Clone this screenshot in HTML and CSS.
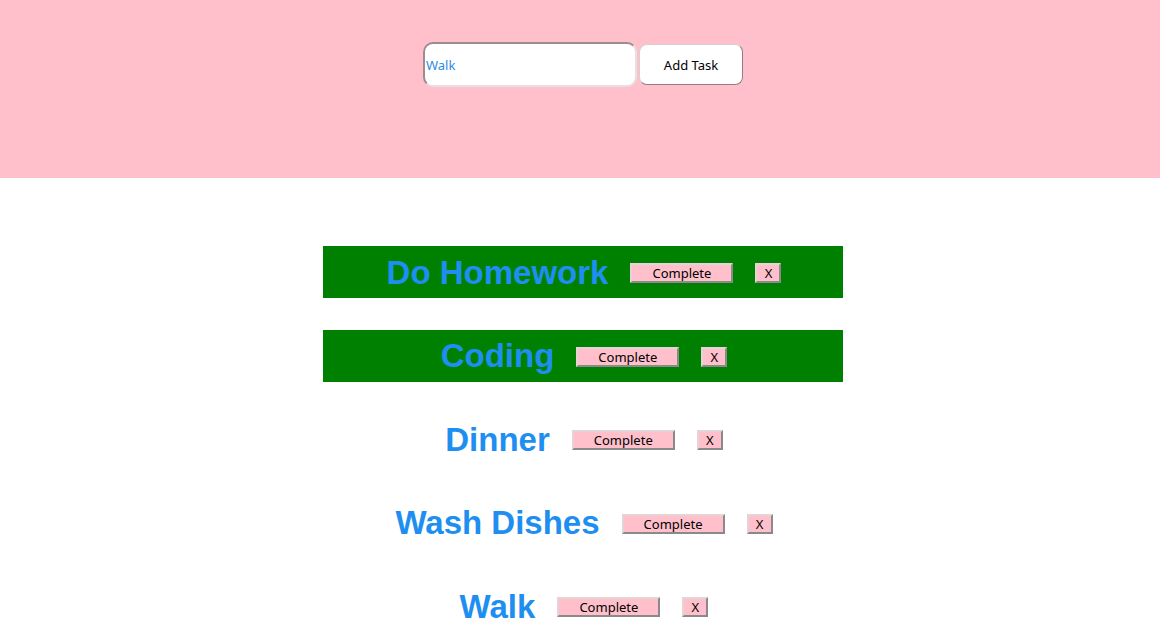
FILE: index.html
```html
<!DOCTYPE html>
<html>
<head>
<meta charset="utf-8">
<link rel="stylesheet" href="styles.css">
</head>
<body>
<header class="top">
  <form class="add-form">
    <input class="task-input" type="text" value="Walk">
    <button class="add-btn" type="button">Add Task</button>
  </form>
</header>
<main class="list">
  <div class="task done"><h2 class="task-title">Do Homework</h2><button class="btn-complete">Complete</button><button class="btn-x">X</button></div>
  <div class="task done"><h2 class="task-title">Coding</h2><button class="btn-complete">Complete</button><button class="btn-x">X</button></div>
  <div class="task"><h2 class="task-title">Dinner</h2><button class="btn-complete">Complete</button><button class="btn-x">X</button></div>
  <div class="task"><h2 class="task-title">Wash Dishes</h2><button class="btn-complete">Complete</button><button class="btn-x">X</button></div>
  <div class="task"><h2 class="task-title">Walk</h2><button class="btn-complete">Complete</button><button class="btn-x">X</button></div>
</main>
</body>
</html>
```
FILE: styles.css
```css
html, body {
  margin: 0;
  padding: 0;
  background: #ffffff;
}

.top {
  background: #ffc0cb;
  height: 178px;
  padding-left: 6px;
  box-sizing: border-box;
}

.add-form {
  display: flex;
  justify-content: center;
  align-items: center;
  gap: 2px;
  padding-top: 42px;
  margin: 0;
}

.task-input {
  width: 214px;
  height: 45px;
  box-sizing: border-box;
  border: 2px solid;
  border-color: #9c8c8c #e8e0e0 #e8e0e0 #9c8c8c;
  border-radius: 10px;
  padding: 0 1px;
  font-family: "Noto Sans", sans-serif;
  font-size: 13px;
  color: #2f8de4;
  background: #fff;
  outline: none;
}

.add-btn {
  width: 104px;
  height: 41px;
  box-sizing: border-box;
  border: 1px solid;
  border-color: #d6d0d0 #8c8080 #8c8080 #d6d0d0;
  border-radius: 8px;
  background: #fff;
  font-family: "Noto Sans", sans-serif;
  font-size: 13px;
  color: #000;
  padding: 0;
}

.list {
  padding: 68px 0 0 6px;
  display: flex;
  flex-direction: column;
  align-items: center;
}

.task {
  width: 520px;
  height: 52px;
  margin-bottom: 31.5px;
  display: flex;
  justify-content: center;
  align-items: center;
  gap: 22px;
  padding-left: 2px;
  box-sizing: border-box;
}

.task.done {
  background: #008000;
}

.task-title {
  margin: 0;
  font-family: "Liberation Sans", Arial, sans-serif;
  font-weight: bold;
  font-size: 33px;
  color: #1e8ff0;
  line-height: 1;
}

.btn-complete,
.btn-x {
  height: 20px;
  margin-top: 2px;
  box-sizing: border-box;
  background: #ffc0cb;
  border: 2px solid;
  border-color: #e4d4d6 #8a8a8a #8a8a8a #e4d4d6;
  font-family: "Noto Sans", sans-serif;
  font-size: 13px;
  line-height: 14px;
  color: #000;
  padding: 0;
}

.btn-complete {
  width: 103px;
}

.btn-x {
  width: 26px;
}
```
